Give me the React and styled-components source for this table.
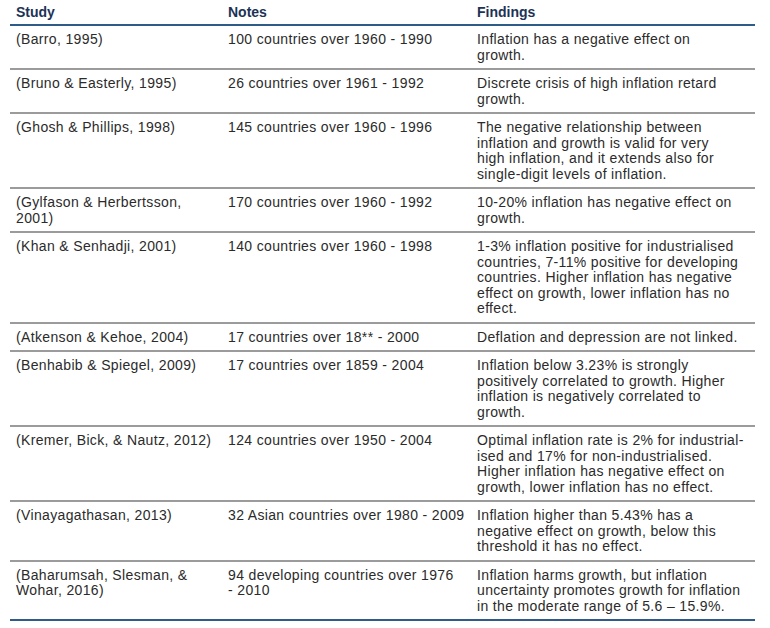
import React from 'react';
import styled, { createGlobalStyle } from 'styled-components';

const studies = [
  {
    study: ['(Barro, 1995)'],
    notes: ['100 countries over 1960 - 1990'],
    findings: ['Inflation has a negative effect on', 'growth.'],
  },
  {
    study: ['(Bruno & Easterly, 1995)'],
    notes: ['26 countries over 1961 - 1992'],
    findings: ['Discrete crisis of high inflation retard', 'growth.'],
  },
  {
    study: ['(Ghosh & Phillips, 1998)'],
    notes: ['145 countries over 1960 - 1996'],
    findings: [
      'The negative relationship between',
      'inflation and growth is valid for very',
      'high inflation, and it extends also for',
      'single-digit levels of inflation.',
    ],
  },
  {
    study: ['(Gylfason & Herbertsson,', '2001)'],
    notes: ['170 countries over 1960 - 1992'],
    findings: ['10-20% inflation has negative effect on', 'growth.'],
  },
  {
    study: ['(Khan & Senhadji, 2001)'],
    notes: ['140 countries over 1960 - 1998'],
    findings: [
      '1-3% inflation positive for industrialised',
      'countries, 7-11% positive for developing',
      'countries. Higher inflation has negative',
      'effect on growth, lower inflation has no',
      'effect.',
    ],
  },
  {
    study: ['(Atkenson & Kehoe, 2004)'],
    notes: ['17 countries over 18** - 2000'],
    findings: ['Deflation and depression are not linked.'],
  },
  {
    study: ['(Benhabib & Spiegel, 2009)'],
    notes: ['17 countries over 1859 - 2004'],
    findings: [
      'Inflation below 3.23% is strongly',
      'positively correlated to growth. Higher',
      'inflation is negatively correlated to',
      'growth.',
    ],
  },
  {
    study: ['(Kremer, Bick, & Nautz, 2012)'],
    notes: ['124 countries over 1950 - 2004'],
    findings: [
      'Optimal inflation rate is 2% for industrial-',
      'ised and 17% for non-industrialised.',
      'Higher inflation has negative effect on',
      'growth, lower inflation has no effect.',
    ],
  },
  {
    study: ['(Vinayagathasan, 2013)'],
    notes: ['32 Asian countries over 1980 - 2009'],
    findings: [
      'Inflation higher than 5.43% has a',
      'negative effect on growth, below this',
      'threshold it has no effect.',
    ],
  },
  {
    study: ['(Baharumsah, Slesman, &', 'Wohar, 2016)'],
    notes: ['94 developing countries over 1976', '- 2010'],
    findings: [
      'Inflation harms growth, but inflation',
      'uncertainty promotes growth for inflation',
      'in the moderate range of 5.6 – 15.9%.',
    ],
  },
];

const GlobalStyle = createGlobalStyle`
  body {
    margin: 0;
    background: #ffffff;
    font-family: "Liberation Sans", Arial, Helvetica, sans-serif;
  }
`;

const Page = styled.div`
  padding: 0 15px 0 10px;
`;

const Table = styled.div`
  width: 745px;
`;

const HeaderRow = styled.div`
  display: grid;
  grid-template-columns: 212px 249px 1fr;
  border-bottom: 2px solid #2f5b88;
`;

const HeadCell = styled.div`
  padding: 4px 6px 4px;
  font-size: 14px;
  line-height: 16px;
  font-weight: 700;
  color: #1c3256;
`;

const Row = styled.div`
  display: grid;
  grid-template-columns: 212px 249px 1fr;
  border-bottom: 2px solid ${(p) => (p.$last ? '#2f5b88' : '#9b9b9b')};
`;

const Cell = styled.div`
  padding: 6px 6px 5px;
  font-size: 14px;
  line-height: 15.5px;
  letter-spacing: 0.35px;
  color: #2b2b2b;
  white-space: nowrap;
`;

const Line = styled.span`
  display: block;
`;

const Lines = ({ items }) => (
  <Cell>
    {items.map((text, i) => (
      <Line key={i}>{text}</Line>
    ))}
  </Cell>
);

const App = () => {
  return (
    <Page>
      <GlobalStyle />
      <Table>
        <HeaderRow>
          <HeadCell>Study</HeadCell>
          <HeadCell>Notes</HeadCell>
          <HeadCell>Findings</HeadCell>
        </HeaderRow>
        {studies.map((row, index) => (
          <Row key={index} $last={index === studies.length - 1}>
            <Lines items={row.study} />
            <Lines items={row.notes} />
            <Lines items={row.findings} />
          </Row>
        ))}
      </Table>
    </Page>
  );
};

export default App;
